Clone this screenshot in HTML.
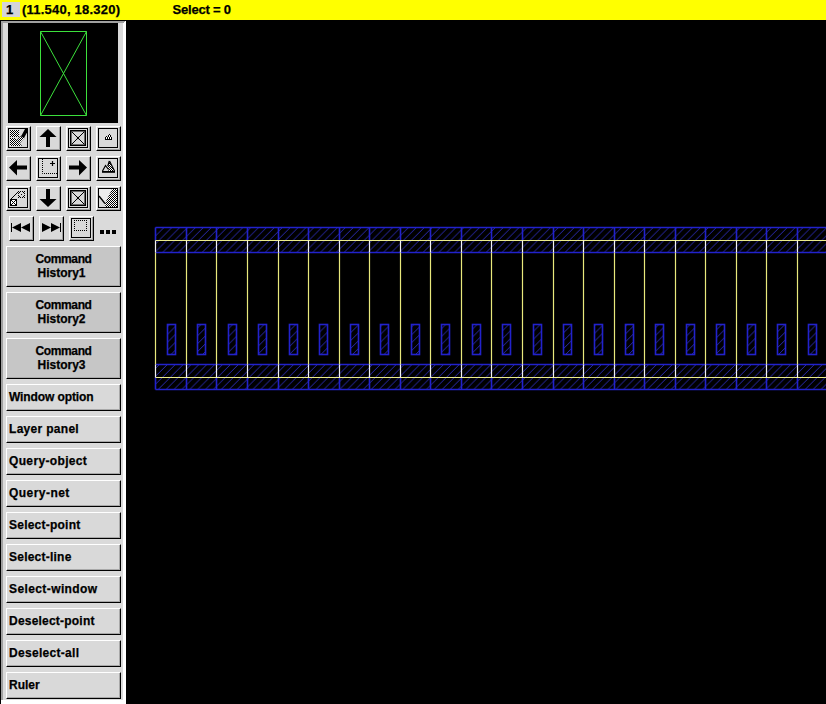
<!DOCTYPE html>
<html><head><meta charset="utf-8">
<style>
html,body{margin:0;padding:0;background:#000;width:826px;height:704px;overflow:hidden;position:relative;font-family:"Liberation Sans",sans-serif;}
.a{position:absolute;}
#bar{left:0;top:0;width:826px;height:20px;background:#ffff00;}
.t{position:absolute;font-weight:bold;-webkit-text-stroke:0.25px #000;font-size:12px;color:#000;white-space:nowrap;line-height:14px;}
#panel{left:0;top:20px;width:126px;height:684px;background:#dadada;}
.btn{position:absolute;left:6px;width:113px;height:25px;background:#d9d9d9;border-top:1px solid #fff;border-left:1px solid #fff;border-right:1px solid #000;border-bottom:1px solid #000;box-shadow:inset -1px -1px 0 #a8a8a8;}
.btn span{position:absolute;-webkit-text-stroke:0.25px #000;left:2px;top:5px;font-weight:bold;font-size:12px;line-height:14px;white-space:nowrap;letter-spacing:0.25px;}
.ch{height:39px;background:#c6c6c6;}
.ch span{left:0;width:113px;text-align:center;top:6px;}
.ib{position:absolute;width:23px;height:23px;background:#d9d9d9;border-top:1px solid #fff;border-left:1px solid #fff;border-right:1px solid #000;border-bottom:1px solid #000;box-shadow:inset -1px -1px 0 #a0a0a0;}
.ib svg{position:absolute;left:-1px;top:-1px;}
</style></head><body>

<div class="a" id="bar"></div>
<div class="a" style="left:2px;top:2px;width:18px;height:15px;background:#d4d4d8"></div>
<div class="t" style="left:6px;top:3px;font-size:13px">1</div>
<div class="t" style="left:22px;top:3px;font-size:13px;letter-spacing:0.22px">(11.540, 18.320)</div>
<div class="t" style="left:172.5px;top:3px;font-size:13px;letter-spacing:-0.2px">Select = 0</div>
<div class="a" id="panel"></div>
<div class="a" style="left:0;top:20px;width:1px;height:684px;background:#000"></div>
<div class="a" style="left:0;top:20px;width:126px;height:1px;background:#000"></div>
<div class="a" style="left:1px;top:21px;width:2px;height:679px;background:#a0a0a0"></div>
<div class="a" style="left:123px;top:21px;width:3px;height:683px;background:#fff"></div>
<div class="a" style="left:1px;top:21px;width:124px;height:1px;background:#a0a0a0"></div>
<div class="a" style="left:1px;top:22px;width:123px;height:1px;background:#a0a0a0"></div>
<div class="a" style="left:1px;top:700px;width:125px;height:4px;background:#fff"></div>
<div class="a" style="left:8px;top:23px;width:110px;height:100px;background:#000"></div>
<svg class="a" style="left:0;top:0" width="126" height="130"><path d="M40.5,31.5H86.5V115.5H40.5Z M40.5,31.5L86.5,115.5 M86.5,31.5L40.5,115.5" stroke="#3ce03c" stroke-width="1" fill="none"/></svg>
<div class="ib" style="left:6px;top:126px"><svg width="25" height="25"><defs><pattern id="st1" patternUnits="userSpaceOnUse" width="2" height="2"><rect width="2" height="2" fill="#fff"/><rect x="0" y="0" width="1" height="1" fill="#000"/><rect x="1" y="1" width="1" height="1" fill="#000"/></pattern><pattern id="sd1" patternUnits="userSpaceOnUse" width="2" height="2"><rect width="2" height="2" fill="#000"/><rect x="1" y="1" width="1" height="1" fill="#fff"/></pattern></defs><rect x="2.5" y="2.5" width="19" height="19" stroke="#000" fill="none"/><rect x="4" y="4" width="9" height="7" fill="url(#st1)"/>
<polygon points="4,12 9,12 16,20 4,20" fill="url(#st1)"/>
<polygon points="11,13.5 15.5,9.5 18.5,12 14,17" fill="url(#st1)"/>
<polygon points="15,10.5 19,3 21,3 21,6.5 18,12" fill="#000"/></svg></div>
<div class="ib" style="left:36px;top:126px"><svg width="25" height="25"><defs><pattern id="st2" patternUnits="userSpaceOnUse" width="2" height="2"><rect width="2" height="2" fill="#fff"/><rect x="0" y="0" width="1" height="1" fill="#000"/><rect x="1" y="1" width="1" height="1" fill="#000"/></pattern><pattern id="sd2" patternUnits="userSpaceOnUse" width="2" height="2"><rect width="2" height="2" fill="#000"/><rect x="1" y="1" width="1" height="1" fill="#fff"/></pattern></defs><polygon points="12,3 20.5,11 14,11 14,21 10,21 10,11 3.5,11" fill="#000"/></svg></div>
<div class="ib" style="left:66px;top:126px"><svg width="25" height="25"><defs><pattern id="st3" patternUnits="userSpaceOnUse" width="2" height="2"><rect width="2" height="2" fill="#fff"/><rect x="0" y="0" width="1" height="1" fill="#000"/><rect x="1" y="1" width="1" height="1" fill="#000"/></pattern><pattern id="sd3" patternUnits="userSpaceOnUse" width="2" height="2"><rect width="2" height="2" fill="#000"/><rect x="1" y="1" width="1" height="1" fill="#fff"/></pattern></defs><rect x="2.5" y="2.5" width="19" height="19" stroke="#000" fill="none"/><rect x="4.75" y="4.75" width="14.5" height="14.5" stroke="#000" stroke-width="1.5" fill="none"/>
<path d="M6,6L18,18M18,6L6,18" stroke="#000" stroke-width="1"/><circle cx="12" cy="12" r="1.2"/></svg></div>
<div class="ib" style="left:96px;top:126px"><svg width="25" height="25"><defs><pattern id="st4" patternUnits="userSpaceOnUse" width="2" height="2"><rect width="2" height="2" fill="#fff"/><rect x="0" y="0" width="1" height="1" fill="#000"/><rect x="1" y="1" width="1" height="1" fill="#000"/></pattern><pattern id="sd4" patternUnits="userSpaceOnUse" width="2" height="2"><rect width="2" height="2" fill="#000"/><rect x="1" y="1" width="1" height="1" fill="#fff"/></pattern></defs><rect x="2.5" y="2.5" width="19" height="19" stroke="#000" fill="none"/><rect x="9" y="11" width="7" height="3"/><rect x="10" y="10" width="1" height="1"/><rect x="12" y="9" width="3" height="2"/><rect x="13" y="8" width="1" height="1"/>
<rect x="10" y="11" width="1" height="2" fill="#fff"/><rect x="12" y="11" width="1" height="2" fill="#fff"/><rect x="14" y="11" width="1" height="2" fill="#fff"/><rect x="13" y="9" width="1" height="2" fill="#fff"/></svg></div>
<div class="ib" style="left:6px;top:156px"><svg width="25" height="25"><defs><pattern id="st5" patternUnits="userSpaceOnUse" width="2" height="2"><rect width="2" height="2" fill="#fff"/><rect x="0" y="0" width="1" height="1" fill="#000"/><rect x="1" y="1" width="1" height="1" fill="#000"/></pattern><pattern id="sd5" patternUnits="userSpaceOnUse" width="2" height="2"><rect width="2" height="2" fill="#000"/><rect x="1" y="1" width="1" height="1" fill="#fff"/></pattern></defs><polygon points="3,11.5 11,4 11,9.5 21,9.5 21,13.5 11,13.5 11,19.5" fill="#000"/></svg></div>
<div class="ib" style="left:36px;top:156px"><svg width="25" height="25"><defs><pattern id="st6" patternUnits="userSpaceOnUse" width="2" height="2"><rect width="2" height="2" fill="#fff"/><rect x="0" y="0" width="1" height="1" fill="#000"/><rect x="1" y="1" width="1" height="1" fill="#000"/></pattern><pattern id="sd6" patternUnits="userSpaceOnUse" width="2" height="2"><rect width="2" height="2" fill="#000"/><rect x="1" y="1" width="1" height="1" fill="#fff"/></pattern></defs><rect x="2.5" y="2.5" width="19" height="19" stroke="#000" fill="none"/><path d="M6.5,3V17.5H21" stroke="#000" stroke-dasharray="1,1" fill="none"/><path d="M16.5,5v5M14,7.5h5" stroke="#000" stroke-width="1.2"/></svg></div>
<div class="ib" style="left:66px;top:156px"><svg width="25" height="25"><defs><pattern id="st7" patternUnits="userSpaceOnUse" width="2" height="2"><rect width="2" height="2" fill="#fff"/><rect x="0" y="0" width="1" height="1" fill="#000"/><rect x="1" y="1" width="1" height="1" fill="#000"/></pattern><pattern id="sd7" patternUnits="userSpaceOnUse" width="2" height="2"><rect width="2" height="2" fill="#000"/><rect x="1" y="1" width="1" height="1" fill="#fff"/></pattern></defs><polygon points="21,11.5 13,4 13,9.5 3,9.5 3,13.5 13,13.5 13,19.5" fill="#000"/></svg></div>
<div class="ib" style="left:96px;top:156px"><svg width="25" height="25"><defs><pattern id="st8" patternUnits="userSpaceOnUse" width="2" height="2"><rect width="2" height="2" fill="#fff"/><rect x="0" y="0" width="1" height="1" fill="#000"/><rect x="1" y="1" width="1" height="1" fill="#000"/></pattern><pattern id="sd8" patternUnits="userSpaceOnUse" width="2" height="2"><rect width="2" height="2" fill="#000"/><rect x="1" y="1" width="1" height="1" fill="#fff"/></pattern></defs><rect x="2.5" y="2.5" width="19" height="19" stroke="#000" fill="none"/><polygon points="13.5,5 18.5,15 12.5,15 11.5,10" fill="url(#st8)"/>
<path d="M6.5,15L9.5,9.5L12.5,13.5 M13.5,5L18.5,15 M13.3,5L11.8,10" stroke="#000" stroke-width="1.2" fill="none"/><rect x="6" y="15" width="13" height="1.8"/></svg></div>
<div class="ib" style="left:6px;top:186px"><svg width="25" height="25"><defs><pattern id="st9" patternUnits="userSpaceOnUse" width="2" height="2"><rect width="2" height="2" fill="#fff"/><rect x="0" y="0" width="1" height="1" fill="#000"/><rect x="1" y="1" width="1" height="1" fill="#000"/></pattern><pattern id="sd9" patternUnits="userSpaceOnUse" width="2" height="2"><rect width="2" height="2" fill="#000"/><rect x="1" y="1" width="1" height="1" fill="#fff"/></pattern></defs><rect x="2.5" y="2.5" width="19" height="19" stroke="#000" fill="none"/><rect x="4" y="13" width="7" height="7"/><path d="M6,14h1v1h-1zM7,14h1v1h-1zM8,14h1v1h-1zM5,15h1v1h-1zM9,15h1v1h-1zM5,16h1v1h-1zM9,16h1v1h-1zM5,17h1v1h-1zM9,17h1v1h-1zM6,18h1v1h-1zM7,18h1v1h-1zM8,18h1v1h-1zM7,15h1v1h-1zM6,16h1v1h-1zM8,16h1v1h-1zM7,17h1v1h-1z" fill="#fff"/><path d="M5,12h1v1h-1zM6,11h1v1h-1zM7,10h1v1h-1zM8,9h1v1h-1zM9,8h1v1h-1zM10,7h1v1h-1zM11,6h1v1h-1zM12,5h1v1h-1zM14,5h1v1h-1zM16,5h1v1h-1zM18,5h1v1h-1zM13,6h1v1h-1zM17,6h1v1h-1zM12,7h1v1h-1zM18,7h1v1h-1zM15,8h1v1h-1zM12,9h1v1h-1zM18,9h1v1h-1zM13,10h1v1h-1zM17,10h1v1h-1zM12,11h1v1h-1zM14,11h1v1h-1zM16,11h1v1h-1zM18,11h1v1h-1z" fill="#000"/></svg></div>
<div class="ib" style="left:36px;top:186px"><svg width="25" height="25"><defs><pattern id="st10" patternUnits="userSpaceOnUse" width="2" height="2"><rect width="2" height="2" fill="#fff"/><rect x="0" y="0" width="1" height="1" fill="#000"/><rect x="1" y="1" width="1" height="1" fill="#000"/></pattern><pattern id="sd10" patternUnits="userSpaceOnUse" width="2" height="2"><rect width="2" height="2" fill="#000"/><rect x="1" y="1" width="1" height="1" fill="#fff"/></pattern></defs><polygon points="12,21 20.5,13 14,13 14,3 10,3 10,13 3.5,13" fill="#000"/></svg></div>
<div class="ib" style="left:66px;top:186px"><svg width="25" height="25"><defs><pattern id="st11" patternUnits="userSpaceOnUse" width="2" height="2"><rect width="2" height="2" fill="#fff"/><rect x="0" y="0" width="1" height="1" fill="#000"/><rect x="1" y="1" width="1" height="1" fill="#000"/></pattern><pattern id="sd11" patternUnits="userSpaceOnUse" width="2" height="2"><rect width="2" height="2" fill="#000"/><rect x="1" y="1" width="1" height="1" fill="#fff"/></pattern></defs><rect x="2.5" y="2.5" width="19" height="19" stroke="#000" fill="none"/><rect x="4.75" y="4.75" width="14.5" height="14.5" stroke="#000" stroke-width="1.5" fill="none"/>
<path d="M6,6L18,18M18,6L6,18" stroke="#000" stroke-width="1"/><circle cx="12" cy="12" r="1.2"/></svg></div>
<div class="ib" style="left:96px;top:186px"><svg width="25" height="25"><defs><pattern id="st12" patternUnits="userSpaceOnUse" width="2" height="2"><rect width="2" height="2" fill="#fff"/><rect x="0" y="0" width="1" height="1" fill="#000"/><rect x="1" y="1" width="1" height="1" fill="#000"/></pattern><pattern id="sd12" patternUnits="userSpaceOnUse" width="2" height="2"><rect width="2" height="2" fill="#000"/><rect x="1" y="1" width="1" height="1" fill="#fff"/></pattern></defs><rect x="2.5" y="2.5" width="19" height="19" stroke="#000" fill="none"/><polygon points="3,3 16,3 9,17.5 3,10" fill="#ececec"/><polygon points="16,3 21,3 21,21 9.5,21 9,17.5" fill="url(#st12)"/><path d="M3,10L9,17.5" stroke="#000" stroke-width="1.3"/></svg></div>
<div class="ib" style="left:9px;top:216px"><svg width="25" height="25"><defs><pattern id="st13" patternUnits="userSpaceOnUse" width="2" height="2"><rect width="2" height="2" fill="#fff"/><rect x="0" y="0" width="1" height="1" fill="#000"/><rect x="1" y="1" width="1" height="1" fill="#000"/></pattern><pattern id="sd13" patternUnits="userSpaceOnUse" width="2" height="2"><rect width="2" height="2" fill="#000"/><rect x="1" y="1" width="1" height="1" fill="#fff"/></pattern></defs><rect x="2" y="7" width="1" height="9" fill="#000"/><polygon points="3,11.5 12,7 12,16" fill="#000"/><polygon points="12,11.5 21,7 21,16" fill="#000"/></svg></div>
<div class="ib" style="left:39px;top:216px"><svg width="25" height="25"><defs><pattern id="st14" patternUnits="userSpaceOnUse" width="2" height="2"><rect width="2" height="2" fill="#fff"/><rect x="0" y="0" width="1" height="1" fill="#000"/><rect x="1" y="1" width="1" height="1" fill="#000"/></pattern><pattern id="sd14" patternUnits="userSpaceOnUse" width="2" height="2"><rect width="2" height="2" fill="#000"/><rect x="1" y="1" width="1" height="1" fill="#fff"/></pattern></defs><rect x="21" y="7" width="1" height="9" fill="#000"/><polygon points="21,11.5 12,7 12,16" fill="#000"/><polygon points="12,11.5 3,7 3,16" fill="#000"/></svg></div>
<div class="ib" style="left:69px;top:216px"><svg width="25" height="25"><defs><pattern id="st15" patternUnits="userSpaceOnUse" width="2" height="2"><rect width="2" height="2" fill="#fff"/><rect x="0" y="0" width="1" height="1" fill="#000"/><rect x="1" y="1" width="1" height="1" fill="#000"/></pattern><pattern id="sd15" patternUnits="userSpaceOnUse" width="2" height="2"><rect width="2" height="2" fill="#000"/><rect x="1" y="1" width="1" height="1" fill="#fff"/></pattern></defs><rect x="2.5" y="2.5" width="19" height="19" stroke="#000" fill="none"/><path d="M5,4h1v1h-1zM7,4h1v1h-1zM9,4h1v1h-1zM11,4h1v1h-1zM13,4h1v1h-1zM15,4h1v1h-1zM17,4h1v1h-1zM5,14h1v1h-1zM7,14h1v1h-1zM9,14h1v1h-1zM11,14h1v1h-1zM13,14h1v1h-1zM15,14h1v1h-1zM17,14h1v1h-1zM5,6h1v1h-1zM5,8h1v1h-1zM5,10h1v1h-1zM5,12h1v1h-1zM17,6h1v1h-1zM17,8h1v1h-1zM17,10h1v1h-1zM17,12h1v1h-1z" fill="#000"/></svg></div>
<div class="a" style="left:100px;top:230px;width:4px;height:4px;background:#000"></div>
<div class="a" style="left:106px;top:230px;width:4px;height:4px;background:#000"></div>
<div class="a" style="left:112px;top:230px;width:4px;height:4px;background:#000"></div>
<div class="btn ch" style="top:246px"><span style="letter-spacing:-0.35px;top:5px">Command</span><span style="letter-spacing:0;top:19px;left:-2px">History1</span></div>
<div class="btn ch" style="top:292px"><span style="letter-spacing:-0.35px;top:5px">Command</span><span style="letter-spacing:0;top:19px;left:-2px">History2</span></div>
<div class="btn ch" style="top:338px"><span style="letter-spacing:-0.35px;top:5px">Command</span><span style="letter-spacing:0;top:19px;left:-2px">History3</span></div>
<div class="btn" style="top:384px"><span style="letter-spacing:-0.1px">Window option</span></div>
<div class="btn" style="top:416px"><span style="letter-spacing:0.3px">Layer panel</span></div>
<div class="btn" style="top:448px"><span style="letter-spacing:0.35px">Query-object</span></div>
<div class="btn" style="top:480px"><span style="letter-spacing:0.45px">Query-net</span></div>
<div class="btn" style="top:512px"><span style="letter-spacing:0.23px">Select-point</span></div>
<div class="btn" style="top:544px"><span style="letter-spacing:0.23px">Select-line</span></div>
<div class="btn" style="top:576px"><span style="letter-spacing:0.4px">Select-window</span></div>
<div class="btn" style="top:608px"><span style="letter-spacing:0.21px">Deselect-point</span></div>
<div class="btn" style="top:640px"><span style="letter-spacing:0.3px">Deselect-all</span></div>
<div class="btn" style="top:672px"><span style="letter-spacing:0px">Ruler</span></div>
<svg width="700" height="704" viewBox="126 0 700 704" style="position:absolute;left:126px;top:0;filter:blur(0.35px);">
<defs><pattern id="h" patternUnits="userSpaceOnUse" width="7.89" height="7.89" x="4.8" y="0"><path d="M-1,8.89 L8.89,-1 M-2,2 L2,-2 M5.89,9.89 L9.89,5.89" stroke="#2e2ec4" stroke-width="0.9"/></pattern><pattern id="h2" patternUnits="userSpaceOnUse" width="7.89" height="7.89" x="3.2" y="0"><path d="M-1,8.89 L8.89,-1 M-2,2 L2,-2 M5.89,9.89 L9.89,5.89" stroke="#2e2ec4" stroke-width="0.9"/></pattern></defs>
<rect x="155.5" y="227.5" width="830" height="25" fill="url(#h)"/>
<rect x="155.5" y="364.5" width="830" height="25" fill="url(#h2)"/>
<rect x="167.5" y="324.5" width="8" height="30" fill="url(#h)" stroke="#2222cc" stroke-width="1.6"/>
<rect x="197.5" y="324.5" width="8" height="30" fill="url(#h)" stroke="#2222cc" stroke-width="1.6"/>
<rect x="228.5" y="324.5" width="8" height="30" fill="url(#h)" stroke="#2222cc" stroke-width="1.6"/>
<rect x="258.5" y="324.5" width="8" height="30" fill="url(#h)" stroke="#2222cc" stroke-width="1.6"/>
<rect x="289.5" y="324.5" width="8" height="30" fill="url(#h)" stroke="#2222cc" stroke-width="1.6"/>
<rect x="319.5" y="324.5" width="8" height="30" fill="url(#h)" stroke="#2222cc" stroke-width="1.6"/>
<rect x="350.5" y="324.5" width="8" height="30" fill="url(#h)" stroke="#2222cc" stroke-width="1.6"/>
<rect x="380.5" y="324.5" width="8" height="30" fill="url(#h)" stroke="#2222cc" stroke-width="1.6"/>
<rect x="411.5" y="324.5" width="8" height="30" fill="url(#h)" stroke="#2222cc" stroke-width="1.6"/>
<rect x="441.5" y="324.5" width="8" height="30" fill="url(#h)" stroke="#2222cc" stroke-width="1.6"/>
<rect x="472.5" y="324.5" width="8" height="30" fill="url(#h)" stroke="#2222cc" stroke-width="1.6"/>
<rect x="502.5" y="324.5" width="8" height="30" fill="url(#h)" stroke="#2222cc" stroke-width="1.6"/>
<rect x="533.5" y="324.5" width="8" height="30" fill="url(#h)" stroke="#2222cc" stroke-width="1.6"/>
<rect x="563.5" y="324.5" width="8" height="30" fill="url(#h)" stroke="#2222cc" stroke-width="1.6"/>
<rect x="594.5" y="324.5" width="8" height="30" fill="url(#h)" stroke="#2222cc" stroke-width="1.6"/>
<rect x="625.5" y="324.5" width="8" height="30" fill="url(#h)" stroke="#2222cc" stroke-width="1.6"/>
<rect x="655.5" y="324.5" width="8" height="30" fill="url(#h)" stroke="#2222cc" stroke-width="1.6"/>
<rect x="686.5" y="324.5" width="8" height="30" fill="url(#h)" stroke="#2222cc" stroke-width="1.6"/>
<rect x="716.5" y="324.5" width="8" height="30" fill="url(#h)" stroke="#2222cc" stroke-width="1.6"/>
<rect x="747.5" y="324.5" width="8" height="30" fill="url(#h)" stroke="#2222cc" stroke-width="1.6"/>
<rect x="777.5" y="324.5" width="8" height="30" fill="url(#h)" stroke="#2222cc" stroke-width="1.6"/>
<rect x="808.5" y="324.5" width="8" height="30" fill="url(#h)" stroke="#2222cc" stroke-width="1.6"/>
<path d="M155.5,227.5H830 M155.5,252.5H830 M155.5,364.5H830 M155.5,389.5H830" stroke="#2222cc" stroke-width="1.6" fill="none"/>
<path d="M155.5,227.5V240.5 M155.5,377.5V389.5 M186.5,227.5V240.5 M186.5,377.5V389.5 M216.5,227.5V240.5 M216.5,377.5V389.5 M247.5,227.5V240.5 M247.5,377.5V389.5 M278.5,227.5V240.5 M278.5,377.5V389.5 M308.5,227.5V240.5 M308.5,377.5V389.5 M339.5,227.5V240.5 M339.5,377.5V389.5 M369.5,227.5V240.5 M369.5,377.5V389.5 M400.5,227.5V240.5 M400.5,377.5V389.5 M430.5,227.5V240.5 M430.5,377.5V389.5 M461.5,227.5V240.5 M461.5,377.5V389.5 M491.5,227.5V240.5 M491.5,377.5V389.5 M522.5,227.5V240.5 M522.5,377.5V389.5 M553.5,227.5V240.5 M553.5,377.5V389.5 M583.5,227.5V240.5 M583.5,377.5V389.5 M614.5,227.5V240.5 M614.5,377.5V389.5 M644.5,227.5V240.5 M644.5,377.5V389.5 M675.5,227.5V240.5 M675.5,377.5V389.5 M705.5,227.5V240.5 M705.5,377.5V389.5 M736.5,227.5V240.5 M736.5,377.5V389.5 M766.5,227.5V240.5 M766.5,377.5V389.5 M797.5,227.5V240.5 M797.5,377.5V389.5 M827.5,227.5V240.5 M827.5,377.5V389.5" stroke="#2222cc" stroke-width="1.6" fill="none"/>
<path d="M155.5,240.5H830 M155.5,377.5H830" stroke="#ecec8c" stroke-width="1.2" fill="none"/>
<path d="M155.5,252.5V364.5 M186.5,252.5V364.5 M216.5,252.5V364.5 M247.5,252.5V364.5 M278.5,252.5V364.5 M308.5,252.5V364.5 M339.5,252.5V364.5 M369.5,252.5V364.5 M400.5,252.5V364.5 M430.5,252.5V364.5 M461.5,252.5V364.5 M491.5,252.5V364.5 M522.5,252.5V364.5 M553.5,252.5V364.5 M583.5,252.5V364.5 M614.5,252.5V364.5 M644.5,252.5V364.5 M675.5,252.5V364.5 M705.5,252.5V364.5 M736.5,252.5V364.5 M766.5,252.5V364.5 M797.5,252.5V364.5 M827.5,252.5V364.5" stroke="#e8e87c" stroke-width="1.2" fill="none"/>
<path d="M155.5,240.5V252.5 M155.5,364.5V377.5 M186.5,240.5V252.5 M186.5,364.5V377.5 M216.5,240.5V252.5 M216.5,364.5V377.5 M247.5,240.5V252.5 M247.5,364.5V377.5 M278.5,240.5V252.5 M278.5,364.5V377.5 M308.5,240.5V252.5 M308.5,364.5V377.5 M339.5,240.5V252.5 M339.5,364.5V377.5 M369.5,240.5V252.5 M369.5,364.5V377.5 M400.5,240.5V252.5 M400.5,364.5V377.5 M430.5,240.5V252.5 M430.5,364.5V377.5 M461.5,240.5V252.5 M461.5,364.5V377.5 M491.5,240.5V252.5 M491.5,364.5V377.5 M522.5,240.5V252.5 M522.5,364.5V377.5 M553.5,240.5V252.5 M553.5,364.5V377.5 M583.5,240.5V252.5 M583.5,364.5V377.5 M614.5,240.5V252.5 M614.5,364.5V377.5 M644.5,240.5V252.5 M644.5,364.5V377.5 M675.5,240.5V252.5 M675.5,364.5V377.5 M705.5,240.5V252.5 M705.5,364.5V377.5 M736.5,240.5V252.5 M736.5,364.5V377.5 M766.5,240.5V252.5 M766.5,364.5V377.5 M797.5,240.5V252.5 M797.5,364.5V377.5 M827.5,240.5V252.5 M827.5,364.5V377.5" stroke="#f2f2f2" stroke-width="1.2" fill="none"/>
</svg>
</body></html>
